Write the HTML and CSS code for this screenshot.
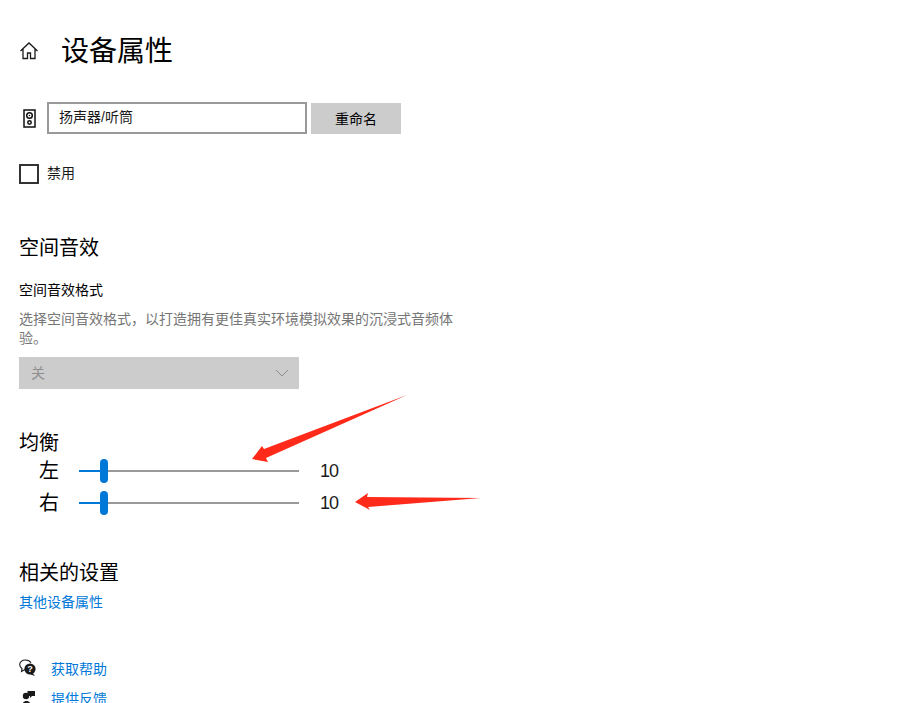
FILE: index.html
```html
<!DOCTYPE html>
<html lang="zh-CN">
<head>
    <meta charset="UTF-8">
    <meta name="viewport" content="width=device-width, initial-scale=1.0">
    <title>设备属性</title>
    <link rel="stylesheet" href="styles.css">
</head>
<body>
    <div class="page">
        <header class="page-header">
            <svg class="home-icon" viewBox="0 0 20 20" width="20" height="20" fill="none" stroke="#1a1a1a" stroke-width="1.3">
                <path d="M1.500 10 10 2l8.500 8M4 8v9.500h4.500v-5.500h3v5.500H16V8"/>
            </svg>
            <h1>设备属性</h1>
        </header>

        <div class="name-row">
            <svg class="speaker-icon" viewBox="0 0 13 19" width="13" height="19" fill="none" stroke="#111" stroke-width="1.500">
                <rect x="1" y="1" width="11" height="17"/>
                <circle cx="6.500" cy="6.500" r="2.800"/>
                <circle cx="6.500" cy="6.500" r="0.800" fill="#111" stroke="none"/>
                <circle cx="6.500" cy="13.500" r="1.700"/>
            </svg>
            <div class="name-input">扬声器/听筒</div>
            <button class="rename-btn">重命名</button>
        </div>

        <label class="check-row">
            <span class="check-box"></span>
            <span class="check-text">禁用</span>
        </label>

        <h2 class="spatial-title">空间音效</h2>
        <div class="field-label">空间音效格式</div>
        <p class="field-desc">选择空间音效格式，以打造拥有更佳真实环境模拟效果的沉浸式音频体验。</p>
        <div class="select-box">
            <span class="select-text">关</span>
            <svg viewBox="0 0 14 8" width="14" height="8" fill="none" stroke="#8f8f8f" stroke-width="1">
                <path d="M1 1l6 6 6-6"/>
            </svg>
        </div>

        <h2 class="balance-title">均衡</h2>
        <div class="balance-row">
            <span class="channel">左</span>
            <div class="slider"><span class="slider-fill"></span><span class="slider-thumb"></span></div>
            <span class="slider-value">10</span>
        </div>
        <div class="balance-row">
            <span class="channel">右</span>
            <div class="slider"><span class="slider-fill"></span><span class="slider-thumb"></span></div>
            <span class="slider-value">10</span>
        </div>

        <h2 class="related-title">相关的设置</h2>
        <a class="link related-link" href="#">其他设备属性</a>

        <div class="help-list">
            <div class="help-row">
                <svg viewBox="0 0 18 18" width="18" height="18">
                    <path d="M6 10.500 2.500 12.500 3 9.500C1.500 8.500 0.700 7 0.700 5.500 0.700 3 3 1 6.500 1c2.500 0 4.500 1 5.500 2.800" fill="none" stroke="#1a1a1a" stroke-width="1.100"/>
                    <circle cx="11" cy="10" r="5.600" fill="#1a1a1a"/>
                    <path d="M13.500 14 16 17 11.500 15.500z" fill="#1a1a1a"/>
                    <text x="11" y="13.300" class="help-mark">?</text>
                </svg>
                <a class="link" href="#">获取帮助</a>
            </div>
            <div class="help-row">
                <svg viewBox="0 0 18 18" width="18" height="18" fill="#1a1a1a">
                    <circle cx="7" cy="7" r="3.200"/>
                    <path d="M3 18c0-4 2-6 4.500-6s4.500 2 4.500 6z"/>
                    <path d="M8.500 2h7.500v5h-3l-2 2V7H8.500z"/>
                </svg>
                <a class="link" href="#">提供反馈</a>
            </div>
        </div>
    </div>

    <!-- red annotation arrows drawn over the page -->
    <svg class="arrows" viewBox="0 0 904 703" width="904" height="703">
        <path d="M407 395 264 449 262 446 252 459 268 462 266 458z" fill="#ff2a1a"/>
        <path d="M481 498 367 497 368 493 355 502 370 510 368 507z" fill="#ff2a1a"/>
    </svg>
</body>
</html>
```

FILE: styles.css
```css
* {
    margin: 0;
    padding: 0;
    box-sizing: border-box;
}

html, body {
    height: 703px;
    overflow: hidden;
}

body {
    font-family: "Liberation Sans", "Noto Sans CJK SC", sans-serif;
    background: #fff;
    color: #000;
    font-size: 14px;
    position: relative;
}

.page {
    padding: 30px 0 0 19px;
}

.page-header {
    display: flex;
    align-items: center;
    height: 42px;
}

.home-icon {
    display: block;
    margin-right: 23px;
}

h1 {
    margin: 2px 0 0 -1px;
    font-size: 28px;
    font-weight: 400;
    line-height: 42px;
}

h2 {
    font-size: 20px;
    font-weight: 400;
    line-height: 28px;
}

.name-row {
    display: flex;
    align-items: center;
    margin-top: 30px;
    height: 32px;
}

.speaker-icon {
    margin-left: 4px;
}

.name-input {
    width: 260px;
    height: 32px;
    margin-left: 11px;
    padding-left: 10px;
    border: 2px solid #999;
    line-height: 26px;
    color: #1a1a1a;
}

.rename-btn {
    width: 90px;
    height: 31px;
    margin: 1px 0 0 4px;
    padding: 0 0 2px 0;
    border: none;
    background: #ccc;
    color: #000;
    font: inherit;
}

.check-row {
    display: flex;
    align-items: center;
    margin-top: 30px;
    height: 20px;
    color: #1a1a1a;
}

.check-box {
    width: 20px;
    height: 20px;
    margin-right: 8px;
    border: 2px solid #333;
}

.check-text {
    padding-bottom: 4px;
}

.spatial-title {
    margin-top: 50px;
}

.field-label {
    margin-top: 18px;
    line-height: 20px;
    color: #000;
}

.field-desc {
    width: 440px;
    margin-top: 10px;
    line-height: 19px;
    color: #767676;
}

.select-box {
    display: flex;
    justify-content: space-between;
    align-items: center;
    width: 280px;
    height: 32px;
    margin-top: 9px;
    padding: 0 10px 0 12px;
    background: #ccc;
    color: #8f8f8f;
}

.select-text {
    padding-bottom: 2px;
}

.balance-title {
    margin-top: 42px;
    line-height: 24px;
}

.balance-row {
    display: flex;
    align-items: center;
    height: 32px;
}

.channel {
    width: 40px;
    padding-bottom: 4px;
    font-size: 20px;
    text-align: right;
}

.slider {
    position: relative;
    width: 220px;
    height: 2px;
    margin-left: 20px;
    background: #999;
}

.slider-fill {
    position: absolute;
    left: 0;
    top: 0;
    width: 25px;
    height: 2px;
    background: #0078d7;
}

.slider-thumb {
    position: absolute;
    left: 21px;
    top: -11px;
    width: 8px;
    height: 24px;
    border-radius: 4px;
    background: #0078d7;
}

.slider-value {
    margin-left: 21px;
    font-size: 18px;
    letter-spacing: -1px;
    color: #1a1a1a;
}

.related-title {
    margin-top: 40px;
}

.link {
    color: #0078d7;
    text-decoration: none;
}

.related-link {
    display: block;
    margin-top: 5px;
    line-height: 20px;
}

.help-list {
    margin-top: 41px;
}

.help-row {
    display: flex;
    align-items: center;
    gap: 14px;
    height: 30px;
}

.help-mark {
    font-size: 9px;
    font-weight: 700;
    fill: #fff;
    text-anchor: middle;
}

.arrows {
    position: absolute;
    left: 0;
    top: 0;
    pointer-events: none;
}
```
